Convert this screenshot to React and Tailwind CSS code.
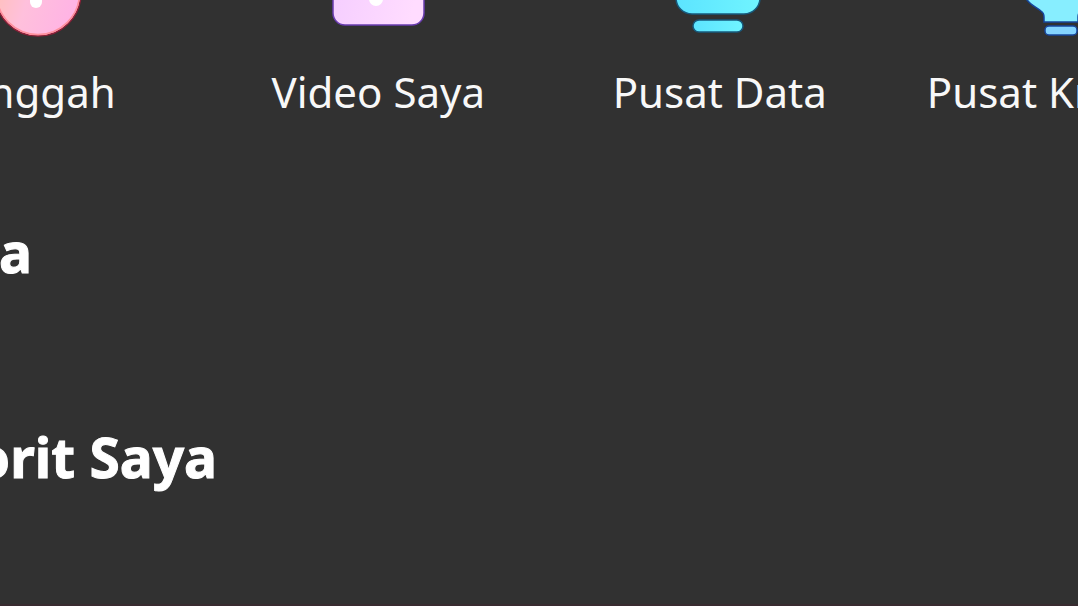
function UploadIcon() {
  return (
    <svg viewBox="0 0 120 120" className="size-[120px]" aria-hidden="true">
      <defs>
        <linearGradient id="upload" x1="0" y1="0" x2="1" y2="0.3">
          <stop offset="0.1" stopColor="#ffc0b8" />
          <stop offset="0.5" stopColor="#ffc0dc" />
          <stop offset="1" stopColor="#ffb4e4" />
        </linearGradient>
      </defs>
      <circle cx="61" cy="73" r="43" fill="url(#upload)" stroke="#8c2038" strokeWidth="1.5" />
      <circle cx="61" cy="73" r="41.5" fill="none" stroke="#ff8f9c" strokeWidth="1.5" />
      <path d="M59 40v42" stroke="#ffffff" strokeWidth="12" strokeLinecap="round" />
    </svg>
  );
}

function VideoIcon() {
  return (
    <svg viewBox="0 0 120 120" className="size-[120px]" aria-hidden="true">
      <defs>
        <linearGradient id="video" x1="0" y1="0" x2="1" y2="0.2">
          <stop offset="0" stopColor="#f4ccff" />
          <stop offset="1" stopColor="#ffdcff" />
        </linearGradient>
      </defs>
      <rect x="15" y="20" width="91" height="85" rx="12" fill="url(#video)" stroke="#6a3cb0" strokeWidth="1.5" />
      <circle cx="58" cy="79" r="7" fill="#ffffff" />
    </svg>
  );
}

function DataIcon() {
  return (
    <svg viewBox="0 0 120 120" className="size-[120px]" aria-hidden="true">
      <defs>
        <linearGradient id="data" x1="0" y1="0" x2="1" y2="0">
          <stop offset="0" stopColor="#5ce4ff" />
          <stop offset="1" stopColor="#70f4ff" />
        </linearGradient>
      </defs>
      <rect x="16" y="20" width="84" height="74" rx="16" fill="url(#data)" stroke="#17597c" strokeWidth="1.5" />
      <rect x="33" y="100" width="50" height="12" rx="6" fill="url(#data)" stroke="#17597c" strokeWidth="1.5" />
    </svg>
  );
}

function CreatorIcon() {
  return (
    <svg viewBox="0 0 120 120" className="size-[120px]" aria-hidden="true">
      <path d="M60 10C36 10 16 30 16 54C16 66 20 74 27 81C30 85 35 87 40 91Q43 93 43 97V102H77V97Q77 93 80 91C85 87 90 85 93 81C100 74 104 66 104 54C104 30 84 10 60 10Z" fill="#87eeff" stroke="#16459c" strokeWidth="1.5" />
      <rect x="44" y="106" width="32" height="9" rx="4" fill="#84d4ff" stroke="#16459c" strokeWidth="1.5" />
    </svg>
  );
}

const shortcuts = [
  { label: "Unggah", Icon: UploadIcon },
  { label: "Video Saya", Icon: VideoIcon },
  { label: "Pusat Data", Icon: DataIcon },
  { label: "Pusat Kreator", Icon: CreatorIcon },
];

export default function App() {
  return (
    <main className="min-h-screen overflow-hidden border-b-2 border-[#382b30] bg-[#313131] font-['Noto_Sans',sans-serif] text-white">
      <nav className="-mt-20 -mr-[154px] -ml-[134px] grid grid-cols-4">
        {shortcuts.map(({ label, Icon }) => (
          <a key={label} href="#" className="flex flex-col items-center gap-6">
            <Icon />
            <span className="text-[42px] leading-[56px] whitespace-nowrap text-[#f8f8f8]">{label}</span>
          </a>
        ))}
      </nav>
      <section className="mt-[92px] -ml-[300px] w-[332px]">
        <h2 className="text-right text-[55px] leading-[80px] font-bold whitespace-nowrap [-webkit-text-stroke:1px_#ffffff]">Karya Saya</h2>
      </section>
      <section className="mt-[125px] -ml-[300px] w-[517px]">
        <h2 className="text-right text-[55px] leading-[80px] font-bold whitespace-nowrap [-webkit-text-stroke:1px_#ffffff]">Favorit Saya</h2>
      </section>
    </main>
  );
}
